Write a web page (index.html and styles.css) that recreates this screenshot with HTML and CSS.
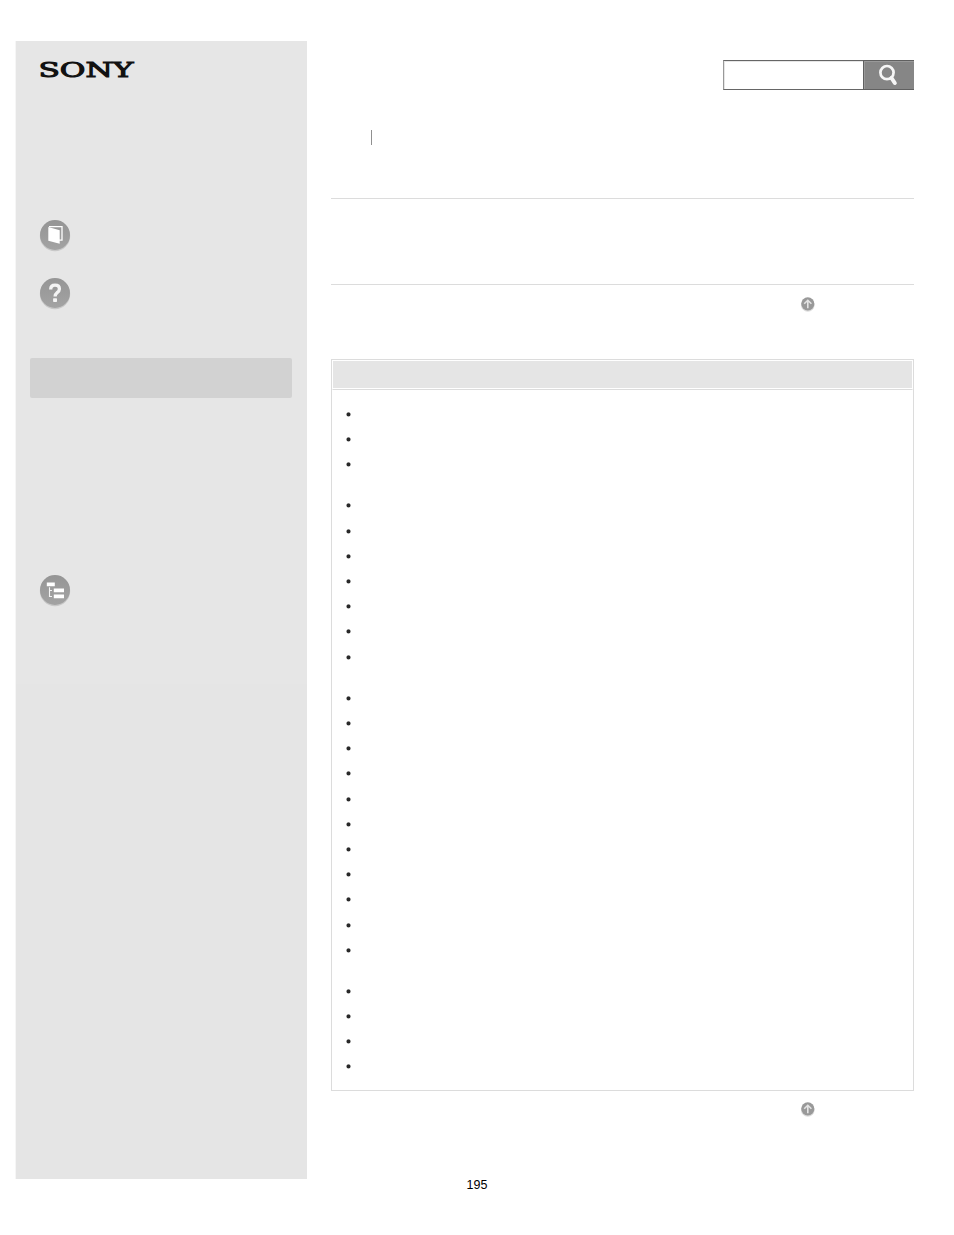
FILE: index.html
```html
<!DOCTYPE html>
<html lang="en">
<head>
<meta charset="utf-8">
<title>Sony Help Guide</title>
<link rel="stylesheet" href="styles.css">
</head>
<body>
<svg class="defs" width="0" height="0" aria-hidden="true">
  <defs>
    <linearGradient id="disc" x1="0" y1="0" x2="0" y2="1"><stop offset="0" stop-color="#959595"/><stop offset="1" stop-color="#a3a3a3"/></linearGradient>
    <symbol id="top-arrow" viewBox="0 0 16 18">
      <circle cx="7.8" cy="9" r="6.8" fill="#dcdcdc"/>
      <circle cx="7.8" cy="7.8" r="6.6" fill="#999"/>
      <path d="M7.8 12.2V4.8M4.2 7.8l3.6-3.5 3.6 3.5" fill="none" stroke="#e4e4e4" stroke-width="1.6"/>
    </symbol>
  </defs>
</svg>
<div class="page">
  <aside class="sidebar">
    <svg class="logo" width="96" height="20" viewBox="0 0 96 20" role="img" aria-label="Sony">
      <text x="-0.6" y="16.7" textLength="95" lengthAdjust="spacingAndGlyphs">SONY</text>
    </svg>
    <nav class="links">
      <svg class="icon" viewBox="0 0 32 33">
        <circle cx="16" cy="17" r="15.2" fill="#c8c8c8"/><circle cx="16" cy="16" r="15" fill="url(#disc)"/>
        <path d="M10 7.7h13v13.5h-3" fill="none" stroke="#fff" stroke-width="1.3"/>
        <path d="M9.3 8l11.4 3.2v13.5L9.3 21.8z" fill="#fff"/>
      </svg>
      <svg class="icon" viewBox="0 0 32 33">
        <circle cx="16" cy="17" r="15.2" fill="#c8c8c8"/><circle cx="16" cy="16" r="15" fill="url(#disc)"/>
        <path d="M11.7 12.4c0-2.7 1.7-4.3 4.3-4.3 2.7 0 4.4 1.5 4.4 3.8 0 3.7-4.3 3.7-4.3 7.5" fill="none" stroke="#f4f4f4" stroke-width="3.3"/>
        <rect x="14.1" y="21.2" width="3.9" height="3.8" rx=".7" fill="#f4f4f4"/>
      </svg>
    </nav>
    <div class="current"></div>
    <svg class="icon" viewBox="0 0 32 33">
      <circle cx="16" cy="17" r="15.2" fill="#c8c8c8"/><circle cx="16" cy="16" r="15" fill="url(#disc)"/>
      <path d="M7.8 8.5h8v3.8h-8zM14.8 14.5H25v3.8H14.8zM14.8 20.5H25v3.8H14.8z" fill="#fff"/>
      <path d="M10.5 13.2v9.3H13M10.5 16.5H13" fill="none" stroke="#f4f4f4" stroke-width="1.1"/>
    </svg>
  </aside>
  <main class="main">
    <form class="search">
      <input class="search-field" type="text" aria-label="Search">
      <button class="search-button" type="button" aria-label="Search">
        <svg width="24" height="24" viewBox="0 0 24 24" fill="none" stroke="#f6f6f6"><circle cx="10" cy="8.6" r="6.6" stroke-width="2.7"/><path d="M14.5 14l3.3 5" stroke-width="4" stroke-linecap="round"/></svg>
      </button>
    </form>
    <div class="separator"></div>
    <div class="heading"></div>
    <svg class="top-link"><use href="#top-arrow"/></svg>
    <section class="topics">
      <div class="topics-title"></div>
      <ul class="list">
        <li></li><li></li><li class="tall"></li>
        <li></li><li></li><li></li><li></li><li></li><li></li><li class="tall"></li>
        <li></li><li></li><li></li><li></li><li></li><li></li><li></li><li></li><li></li><li></li><li class="tall"></li>
        <li></li><li></li><li></li><li></li>
      </ul>
    </section>
    <svg class="top-link bottom"><use href="#top-arrow"/></svg>
  </main>
</div>
<footer class="page-number">195</footer>
</body>
</html>
```
FILE: styles.css
```css
* { box-sizing: border-box; }
body { margin: 0; background: #fff; font-family: "Liberation Sans", Arial, sans-serif; }
svg { display: block; }
.defs { height: 0; }
.page { display: flex; gap: 24px; width: 914px; height: 1179px; padding: 41px 0 0 16px; }
.sidebar {
  width: 291px; height: 1138px;
  background: linear-gradient(#e6e6e6 643px, #e5e5e5 643px);
  box-shadow: -1px 0 #f6f6f6;
}
.logo { margin: 19px 0 0 23px; overflow: visible; }
.logo text { font: 20.5px "DejaVu Serif", serif; fill: #111; stroke: #111; stroke-width: 1px; }
.links { display: grid; gap: 25px; margin-top: 139px; }
.icon { width: 32px; height: 33px; margin-left: 23px; }
.current { width: 262px; height: 40px; margin: 48px 0 176px 14px; border-radius: 2px; background: #d2d2d2; }
.main { width: 583px; }
.search { display: flex; width: 191px; height: 30px; margin: 19px 0 0 392px; }
.search-field {
  width: 140px; height: 30px; padding: 0 5px;
  border: 1px solid #666; border-left-color: #999; border-right: 0; border-radius: 0;
  background: #fff; outline: none;
  box-shadow: inset 1px 1px #e6e6e6;
}
.search-button {
  display: flex; width: 51px; height: 30px; padding: 3px 0 0 13px;
  border: solid #606060; border-width: 1px 0 1px 1px; border-radius: 0;
  background: #868686; box-shadow: inset 1px 1px #999;
}
.separator { width: 1px; height: 15px; margin: 40px 0 0 40px; background: #909090; }
.heading { height: 87px; margin-top: 53px; border: solid #dcdcdc; border-width: 1px 0; }
.top-link { width: 16px; height: 18px; margin: 11px 0 0 469px; }
.topics { height: 732px; margin-top: 45px; border: 1px solid #dcdcdc; }
.topics-title { height: 30px; border: 1px solid #fff; border-bottom-color: #dcdcdc; background: #e5e5e5; box-shadow: inset 0 -1px #fff; }
.list { margin: 0; padding: 22px 0 0 14px; list-style: none; }
.list li { height: 25.23px; }
.list .tall { height: 40.95px; }
.list li::before {
  content: ""; display: block; width: 5px; height: 5px;
  background: radial-gradient(circle at 2.5px 2.4px, #282828 1.5px, transparent 2.5px);
}
.top-link.bottom { margin-top: 10px; }
.page-number { margin-top: -1px; font-size: 12.5px; line-height: 14px; text-align: center; color: #000; }
```
